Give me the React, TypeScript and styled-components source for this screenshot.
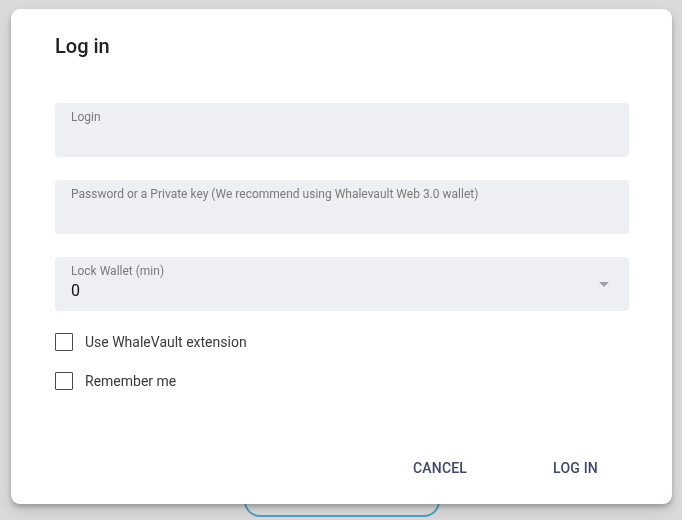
import React from "react";
import styled, { createGlobalStyle } from "styled-components";

const Global = createGlobalStyle`
  html, body { margin: 0; padding: 0; }
  body {
    background: #dadada;
    font-family: Roboto, "Liberation Sans", Arial, sans-serif;
    width: 682px;
    height: 520px;
    overflow: hidden;
  }
`;

const Page = styled.div`
  height: 520px;
  padding-top: 470px;
  box-sizing: border-box;
`;

const BackButton = styled.div`
  margin-left: 244px;
  width: 196px;
  height: 47px;
  box-sizing: border-box;
  border: 2px solid #4ba2c4;
  border-radius: 16px;
  background: #dadada;
`;

const Overlay = styled.div`
  position: fixed;
  inset: 0;
  display: flex;
  justify-content: flex-start;
  align-items: flex-start;
  padding: 9px 0 0 11px;
`;

const Dialog = styled.div`
  width: 661px;
  height: 495px;
  box-sizing: border-box;
  background: #fff;
  border-radius: 9px;
  box-shadow: 0 3px 5px rgba(0, 0, 0, 0.22), 0 6px 14px rgba(0, 0, 0, 0.12);
  padding: 21px 43px 18px 44px;
  display: flex;
  flex-direction: column;
`;

const Title = styled.h2`
  margin: 0;
  font-size: 20px;
  line-height: 32px;
  font-weight: 500;
  color: #222;
`;

const Fields = styled.div`
  margin-top: 41px;
  display: flex;
  flex-direction: column;
  gap: 23px;
`;

const Field = styled.div`
  height: 54px;
  box-sizing: border-box;
  background: #eeeff3;
  border-radius: 4px;
  padding: 6px 20px 0 16px;
  display: flex;
  align-items: flex-start;
`;

const FieldBody = styled.div`
  flex: 1;
  display: flex;
  flex-direction: column;
`;

const Label = styled.span`
  font-size: 12px;
  line-height: 16px;
  color: #7a7a7a;
`;

const Value = styled.span`
  font-size: 16px;
  line-height: 24px;
  color: #111;
`;

const Arrow = styled.span`
  align-self: center;
  margin-top: -6px;
  width: 0;
  height: 0;
  border-left: 5px solid transparent;
  border-right: 5px solid transparent;
  border-top: 5px solid #9d9fb0;
`;

const Checks = styled.div`
  margin-top: 22px;
  display: flex;
  flex-direction: column;
  gap: 21px;
`;

const CheckRow = styled.label`
  display: flex;
  align-items: center;
  height: 18px;
  gap: 12px;
  font-size: 14px;
  color: #3a3a3a;
`;

const Box = styled.span`
  width: 18px;
  height: 18px;
  box-sizing: border-box;
  border: 1.5px solid #4a4a4a;
  border-radius: 1px;
`;

const Actions = styled.div`
  margin-top: 60px;
  display: flex;
  justify-content: flex-end;
  gap: 42px;
  padding-right: 9px;
`;

const Button = styled.button`
  height: 36px;
  padding: 0 22px;
  border: none;
  background: transparent;
  font-family: Roboto, "Liberation Sans", Arial, sans-serif;
  font-size: 14px;
  font-weight: 500;
  letter-spacing: 0.2px;
  color: #3e476b;
  text-transform: uppercase;
  cursor: pointer;
`;

export default function App() {
  return (
    <>
      <Global />
      <Page>
        <BackButton />
      </Page>
      <Overlay>
        <Dialog>
          <Title>Log in</Title>
          <Fields>
            <Field>
              <FieldBody>
                <Label>Login</Label>
              </FieldBody>
            </Field>
            <Field>
              <FieldBody>
                <Label>Password or a Private key (We recommend using Whalevault Web 3.0 wallet)</Label>
              </FieldBody>
            </Field>
            <Field>
              <FieldBody>
                <Label>Lock Wallet (min)</Label>
                <Value>0</Value>
              </FieldBody>
              <Arrow />
            </Field>
          </Fields>
          <Checks>
            <CheckRow>
              <Box />
              Use WhaleVault extension
            </CheckRow>
            <CheckRow>
              <Box />
              Remember me
            </CheckRow>
          </Checks>
          <Actions>
            <Button>Cancel</Button>
            <Button>Log in</Button>
          </Actions>
        </Dialog>
      </Overlay>
    </>
  );
}
